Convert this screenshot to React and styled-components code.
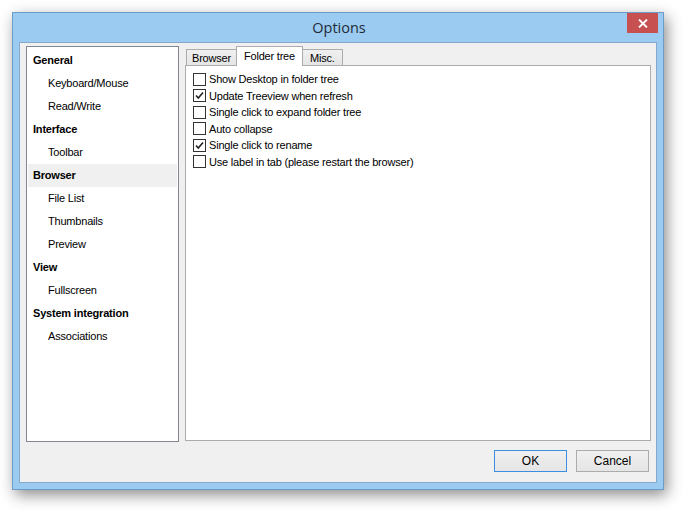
import styled, { createGlobalStyle } from "styled-components";

const GlobalStyle = createGlobalStyle`
  html, body {
    margin: 0;
    padding: 0;
    background: #ffffff;
  }
  body {
    font-family: Tahoma, "Liberation Sans", Arial, sans-serif;
    font-size: 11px;
    letter-spacing: -0.2px;
    color: #000;
  }
`;

const treeItems = [
  { label: "General", header: true },
  { label: "Keyboard/Mouse" },
  { label: "Read/Write" },
  { label: "Interface", header: true },
  { label: "Toolbar" },
  { label: "Browser", header: true, selected: true },
  { label: "File List" },
  { label: "Thumbnails" },
  { label: "Preview" },
  { label: "View", header: true },
  { label: "Fullscreen" },
  { label: "System integration", header: true },
  { label: "Associations" },
];

const options = [
  { label: "Show Desktop in folder tree", checked: false },
  { label: "Update Treeview when refresh", checked: true },
  { label: "Single click to expand folder tree", checked: false },
  { label: "Auto collapse", checked: false },
  { label: "Single click to rename", checked: true },
  { label: "Use label in tab (please restart the browser)", checked: false },
];

const tabs = [
  { label: "Browser", pad: 5 },
  { label: "Folder tree", pad: 7, active: true },
  { label: "Misc.", pad: 7 },
];

export default function App() {
  return (
    <>
      <GlobalStyle />
      <Page>
        <Window>
          <TitleBar>
            <Title>Options</Title>
            <CloseButton>
              <svg width="10" height="9" viewBox="0 0 10 9">
                <path d="M1 0.5 L9 8.5 M9 0.5 L1 8.5" stroke="#fff" strokeWidth="1.8" />
              </svg>
            </CloseButton>
          </TitleBar>
          <Client>
            <Body>
              <Tree>
                {treeItems.map((item) => (
                  <TreeRow key={item.label} $header={item.header} $selected={item.selected}>
                    {item.label}
                  </TreeRow>
                ))}
              </Tree>
              <TabControl>
                <TabStrip>
                  {tabs.map((t) => (
                    <Tab key={t.label} $active={t.active} $pad={t.pad}>
                      {t.label}
                    </Tab>
                  ))}
                </TabStrip>
                <TabPanel>
                  {options.map((o) => (
                    <CheckRow key={o.label}>
                      <Box>
                        {o.checked && (
                          <svg width="11" height="11" viewBox="0 0 11 11">
                            <path d="M2 5.5 L4.3 8 L9 2.5" fill="none" stroke="#222" strokeWidth="1.6" />
                          </svg>
                        )}
                      </Box>
                      <span>{o.label}</span>
                    </CheckRow>
                  ))}
                </TabPanel>
              </TabControl>
            </Body>
            <ButtonRow>
              <Button $default>OK</Button>
              <Button>Cancel</Button>
            </ButtonRow>
          </Client>
        </Window>
      </Page>
    </>
  );
}

const Page = styled.div`
  width: 684px;
  height: 510px;
  padding: 12px 0 0 12px;
  box-sizing: border-box;
`;

const Window = styled.div`
  width: 652px;
  height: 478px;
  box-sizing: border-box;
  border: 1px solid #6d9bc8;
  background: #9ccbf1;
  display: flex;
  flex-direction: column;
  box-shadow: 3px 5px 14px rgba(0, 0, 0, 0.45);
`;

const TitleBar = styled.div`
  height: 29px;
  display: flex;
  align-items: flex-start;
  justify-content: center;
  position: relative;
`;

const Title = styled.div`
  font-family: "Open Sans", "Noto Sans", sans-serif;
  font-size: 14.5px;
  letter-spacing: 0;
  color: #1e2b38;
  margin-top: 5px;
  padding-left: 2px;
`;

const CloseButton = styled.div`
  position: absolute;
  right: 5px;
  top: 0;
  width: 31px;
  height: 20px;
  background: #c75050;
  display: flex;
  align-items: center;
  justify-content: center;
`;

const Client = styled.div`
  flex: 1;
  margin: 0 6px 6px 6px;
  background: #f0f0f0;
  border: 1px solid #86a8cb;
  display: flex;
  flex-direction: column;
  padding: 3px 5px 0 6px;
`;

const Body = styled.div`
  display: flex;
  gap: 6px;
  height: 396px;
`;

const Tree = styled.div`
  width: 153px;
  box-sizing: border-box;
  background: #fff;
  border: 1px solid #828790;
  padding: 2px 1px 1px;
  display: flex;
  flex-direction: column;
`;

const TreeRow = styled.div`
  height: 23px;
  line-height: 23px;
  padding-left: ${(p) => (p.$header ? "5px" : "20px")};
  font-weight: ${(p) => (p.$header ? "bold" : "normal")};
  background: ${(p) => (p.$selected ? "#f0f0f0" : "transparent")};
  white-space: nowrap;
`;

const TabControl = styled.div`
  flex: 1;
  display: flex;
  flex-direction: column;
`;

const TabStrip = styled.div`
  display: flex;
  align-items: flex-end;
  height: 19px;
  padding-left: 1px;
  position: relative;
  z-index: 1;
`;

const Tab = styled.div`
  box-sizing: border-box;
  height: ${(p) => (p.$active ? "20px" : "17px")};
  line-height: ${(p) => (p.$active ? "18px" : "16px")};
  padding: 0 ${(p) => p.$pad}px;
  margin: 0 ${(p) => (p.$active ? "-1px" : "0")} -1px;
  border: 1px solid #acacac;
  border-bottom: ${(p) => (p.$active ? "none" : "1px solid #acacac")};
  background: ${(p) => (p.$active ? "#fff" : "linear-gradient(#f0f0f0, #e5e5e5)")};
  position: relative;
  z-index: ${(p) => (p.$active ? 2 : 1)};
`;

const TabPanel = styled.div`
  flex: 1;
  background: #fff;
  border: 1px solid #acacac;
  padding: 5px 0 0 7px;
  margin-bottom: 1px;
`;

const CheckRow = styled.div`
  display: flex;
  align-items: center;
  gap: 3px;
  height: 16.5px;
  white-space: nowrap;
`;

const Box = styled.div`
  width: 13px;
  height: 13px;
  box-sizing: border-box;
  border: 1px solid #333;
  background: #fff;
  display: flex;
  align-items: center;
  justify-content: center;
`;

const ButtonRow = styled.div`
  display: flex;
  justify-content: flex-end;
  gap: 9px;
  margin-top: 8px;
  padding-right: 2px;
`;

const Button = styled.div`
  width: 73px;
  height: 22px;
  box-sizing: border-box;
  border: 1px solid ${(p) => (p.$default ? "#3c8fe0" : "#acacac")};
  background: linear-gradient(#f0f0f0, #e5e5e5);
  display: flex;
  align-items: center;
  justify-content: center;
  font-family: "Liberation Sans", Arial, sans-serif;
  font-size: 12px;
  letter-spacing: 0;
`;
